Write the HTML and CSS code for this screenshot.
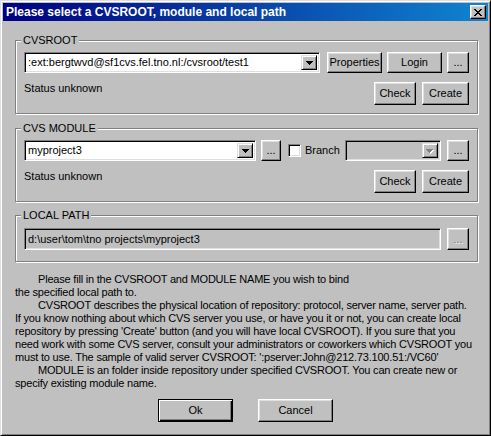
FILE: index.html
```html
<!DOCTYPE html>
<html>
<head>
<meta charset="utf-8">
<link rel="stylesheet" href="styles.css">
</head>
<body>
<div class="window">
  <div class="titlebar">
    <span class="title">Please select a CVSROOT, module and local path</span>
    <span class="btn close"><svg width="8" height="7" viewBox="0 0 8 7" shape-rendering="crispEdges"><path d="M0 0h2v1H0zM6 0h2v1H6zM1 1h2v1H1zM5 1h2v1H5zM2 2h4v1H2zM3 3h2v1H3zM2 4h4v1H2zM1 5h2v1H1zM5 5h2v1H5zM0 6h2v1H0zM6 6h2v1H6z" fill="#000"/></svg></span>
  </div>
  <div class="body">
    <div class="group g-root">
      <span class="legend">CVSROOT</span>
      <div class="row">
        <div class="combo w-root">
          <span class="combo-text">:ext:bergtwvd@sf1cvs.fel.tno.nl:/cvsroot/test1</span>
          <span class="drop"><svg width="7" height="4" viewBox="0 0 7 4" shape-rendering="crispEdges"><path d="M0 0h7v1H0zM1 1h5v1H1zM2 2h3v1H2zM3 3h1v1H3z" fill="#000"/></svg></span>
        </div>
        <span class="btn b-props">Properties</span>
        <span class="btn b-login">Login</span>
        <span class="btn b-dots">...</span>
      </div>
      <div class="status-row">
        <span class="status">Status unknown</span>
        <div class="btns">
          <span class="btn b-check">Check</span>
          <span class="btn b-create">Create</span>
        </div>
      </div>
    </div>

    <div class="group g-module">
      <span class="legend">CVS MODULE</span>
      <div class="row">
        <div class="combo w-module">
          <span class="combo-text">myproject3</span>
          <span class="drop"><svg width="7" height="4" viewBox="0 0 7 4" shape-rendering="crispEdges"><path d="M0 0h7v1H0zM1 1h5v1H1zM2 2h3v1H2zM3 3h1v1H3z" fill="#000"/></svg></span>
        </div>
        <span class="btn b-dots2">...</span>
        <span class="check"></span>
        <span class="check-label">Branch</span>
        <div class="combo disabled w-branch">
          <span class="combo-text"></span>
          <span class="drop"><svg width="8" height="5" viewBox="0 0 8 5" shape-rendering="crispEdges"><path d="M1 1h7v1H1zM2 2h5v1H2zM3 3h3v1H3zM4 4h1v1H4z" fill="#fff"/><path d="M0 0h7v1H0zM1 1h5v1H1zM2 2h3v1H2zM3 3h1v1H3z" fill="#808080"/></svg></span>
        </div>
        <span class="btn b-dots3">...</span>
      </div>
      <div class="status-row">
        <span class="status">Status unknown</span>
        <div class="btns">
          <span class="btn b-check">Check</span>
          <span class="btn b-create">Create</span>
        </div>
      </div>
    </div>

    <div class="group g-local">
      <span class="legend">LOCAL PATH</span>
      <div class="row row-local">
        <div class="field">d:\user\tom\tno projects\myproject3</div>
        <span class="btn b-dots3 btn-disabled">...</span>
      </div>
    </div>

    <div class="help">
      <p>Please fill in the CVSROOT and MODULE NAME you wish to bind<br>the specified local path to.</p>
      <p>CVSROOT describes the physical location of repository: protocol, server name, server path.<br>If you know nothing about which CVS server you use, or have you it or not, you can create local<br>repository by pressing 'Create' button (and you will have local CVSROOT). If you sure that you<br>need work with some CVS server, consult your administrators or coworkers which CVSROOT you<br>must to use. The sample of valid server CVSROOT: ':pserver:John@212.73.100.51:/VC60'</p>
      <p>MODULE is an folder inside repository under specified CVSROOT. You can create new or<br>specify existing module name.</p>
    </div>

    <div class="actions">
      <span class="btn btn-default b-ok">Ok</span>
      <span class="btn b-cancel">Cancel</span>
    </div>
  </div>
</div>
</body>
</html>
```

FILE: styles.css
```css
* { box-sizing: border-box; }
html, body { margin: 0; padding: 0; }
body {
  width: 491px;
  height: 436px;
  overflow: hidden;
  background: #c0c0c0;
  font-family: "Liberation Sans", Arial, sans-serif;
  font-size: 11px;
  color: #000;
}
.window {
  width: 491px;
  height: 436px;
  border: 1px solid;
  border-color: #dfdfdf #000 #000 #dfdfdf;
  box-shadow: inset 1px 1px #fff, inset -1px -1px #808080;
  padding: 2px;
  background: #c0c0c0;
  display: flex;
  flex-direction: column;
}
.titlebar {
  height: 18px;
  flex: none;
  background: linear-gradient(to right, #000080, #1084d0);
  display: flex;
  align-items: center;
  justify-content: space-between;
  padding: 0 2px 0 3px;
}
.title {
  color: #fff;
  font-weight: bold;
  font-size: 12px;
  line-height: 18px;
  white-space: nowrap;
}
.btn {
  display: flex;
  align-items: center;
  justify-content: center;
  border: 1px solid;
  border-color: #fff #000 #000 #fff;
  box-shadow: inset -1px -1px #808080, inset 1px 1px #dfdfdf;
  background: #c0c0c0;
  white-space: nowrap;
  line-height: 13px;
  flex: none;
}
.close { width: 16px; height: 14px; }
.body {
  padding: 19px 10px 0 12px;
}
.group {
  position: relative;
  border: 1px solid #808080;
  box-shadow: inset 1px 1px #fff, 1px 1px #fff;
  padding: 11px 8px 8px 8px;
}
.g-module { margin-top: 14px; }
.g-local { margin-top: 13px; padding-top: 12px; padding-bottom: 11px; }
.legend {
  position: absolute;
  top: -7px;
  left: 5px;
  padding: 0 2px;
  background: #c0c0c0;
  line-height: 13px;
  white-space: nowrap;
}
.row {
  display: flex;
  align-items: center;
  height: 21px;
}
.row-local { height: 22px; }
.combo {
  height: 21px;
  display: flex;
  align-items: stretch;
  border: 1px solid;
  border-color: #808080 #fff #fff #808080;
  box-shadow: inset 1px 1px #000, inset -1px -1px #dfdfdf;
  background: #fff;
  padding: 2px;
  flex: none;
}
.combo.disabled { background: #c0c0c0; }
.combo-text {
  flex: 1;
  padding-left: 1px;
  line-height: 15px;
  white-space: nowrap;
  overflow: hidden;
}
.drop {
  width: 16px;
  display: flex;
  align-items: center;
  justify-content: center;
  border: 1px solid;
  border-color: #dfdfdf #000 #000 #dfdfdf;
  box-shadow: inset 1px 1px #fff, inset -1px -1px #808080;
  background: #c0c0c0;
  padding-top: 1px;
}
.w-root { width: 296px; }
.b-props { width: 55px; height: 21px; margin-left: 7px; }
.b-login { width: 55px; height: 21px; margin-left: 5px; }
.b-dots { width: 22px; height: 21px; margin-left: 5px; }
.w-module { width: 232px; }
.b-dots2 { width: 20px; height: 21px; margin-left: 5px; }
.check {
  width: 13px;
  height: 13px;
  margin-left: 7px;
  flex: none;
  background: #fff;
  border: 1px solid;
  border-color: #808080 #fff #fff #808080;
  box-shadow: inset 1px 1px #000, inset -1px -1px #dfdfdf;
}
.check-label { width: 36px; margin-left: 4px; flex: none; line-height: 13px; }
.w-branch { width: 96px; margin-left: 4px; }
.b-dots3 { width: 22px; height: 21px; margin-left: 6px; }
.row-local .b-dots3 { height: 22px; }
.btn-disabled { color: #808080; text-shadow: 1px 1px #fff; }
.field {
  width: 417px;
  height: 22px;
  flex: none;
  border: 1px solid;
  border-color: #808080 #fff #fff #808080;
  box-shadow: inset 1px 1px #000, inset -1px -1px #dfdfdf;
  background: #c0c0c0;
  padding: 0 3px;
  line-height: 20px;
  white-space: nowrap;
}
.status-row {
  display: flex;
  justify-content: space-between;
  align-items: flex-start;
  margin-top: 9px;
  height: 23px;
}
.status { line-height: 13px; white-space: nowrap; }
.btns { display: flex; gap: 6px; }
.b-check { width: 42px; height: 23px; }
.b-create { width: 47px; height: 23px; }
.help {
  margin-top: 11px;
}
.help p {
  margin: 0;
  text-indent: 23px;
  line-height: 13px;
  white-space: nowrap;
  letter-spacing: -0.2px;
}
.actions {
  display: flex;
  justify-content: center;
  gap: 25px;
  margin: 9px -10px 0 -12px;
}
.b-ok, .b-cancel { width: 75px; height: 23px; }
.btn-default {
  border: 1px solid #000;
  box-shadow: inset 1px 1px #fff, inset -1px -1px #000, inset -2px -2px #808080;
}
```
